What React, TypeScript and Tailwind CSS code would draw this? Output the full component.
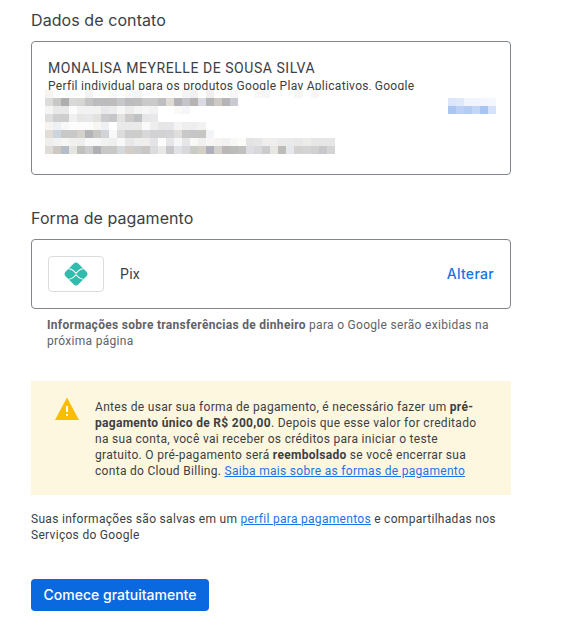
const blurRows: { left: string[]; right?: string[] }[] = [
  {
    left: ['#f7f4ef', '#fafbfc', '#ffffff', '#fdfdfb', '#ffffff', '#f3f3f3', '#ffffff', '#ffffff', '#fafafa', '#ffffff', '#f9f9f9', '#f5f5f5', '#ffffff', '#ffffff', '#ffffff', '#ffffff', '#ffffff', '#f5f5f5', '#f1f1f1', '#ffffff', '#f0f0f0', '#ffffff', '#ffffff', '#f6f6f6', '#ffffff', '#ffffff', '#fbf9f6', '#f5f6f8', '#ffffff', '#ffffff', '#ffffff', '#f6f6f6', '#ffffff', '#f6f6f6'],
  },
  {
    left: ['#dcdcdc', '#c8c8c4', '#aeaeb0', '#d8d8d6', '#d6d6d2', '#c4c6c6', '#bcbcc0', '#bcbcbe', '#bebcbc', '#c6c8cc', '#bcbcbe', '#bebebe', '#cacaca', '#cacaca', '#bebec2', '#dfdbd4', '#b2b2b8', '#c4c4c8', '#b8b2b0', '#d8dce2', '#b6b6b6', '#cec8c4', '#b6b4b6', '#c8cad2'],
    right: ['#dce6fa', '#dfe9fb', '#f0f4fd', '#f0f4fd', '#f3f6fe', '#f4f7fe'],
  },
  {
    left: ['#f6f4f2', '#e8e8e8', '#e8e8e8', '#fbfcfc', '#f2f2f2', '#f2f2f2', '#f2f2f0', '#e8e8ea', '#ececec', '#f8f6f4', '#ececec', '#f4f4f4', '#f6f6f6', '#f2f2f2', '#ffffff', '#ffffff', '#fcfaf6', '#f4f6f9'],
    right: ['#acc6f2', '#bcd1f5', '#b4ccf4', '#c4d6f6', '#a8c4f2', '#d4e2fa'],
  },
  {
    left: ['#dedede', '#cfcfcf', '#cecece', '#f0f0f0', '#e8e6e4', '#e8e8ea', '#e4e2e0', '#ccccce', '#c6c6ca', '#e4e2e0', '#cecccA', '#bfc1c5', '#e6e6e8', '#e8e8ea'],
  },
  {
    left: ['#f6f3f0', '#eef1f4', '#f8f8f8', '#fdfdfd', '#fcfcfc', '#fcfcfc', '#f8f6f3', '#eef0f3', '#ffffff', '#e9e9e9', '#e9e9e9', '#e9e9e9', '#f8f9f8', '#eeeeee', '#e6e6e6', '#e6e6e8', '#f4f4f4', '#eeeeee', '#eeeeee', '#f2f2f2'],
  },
  {
    left: ['#e4dcd6', '#ccd4de', '#c8c8c8', '#c8c8c8', '#d4d0ca', '#b4b4b8', '#c8c6c4', '#d0d4d8', '#f8f8f8', '#dcdcdc', '#cdcdcd', '#cdcdc9', '#d8d8da', '#d2d2d4', '#d2d2d4', '#d4d4d6', '#e0dedc', '#c8c8c8', '#c6c6c6', '#c6c6c2', '#f2f4f8'],
  },
  {
    left: ['#eeeeec', '#f2f2f2', '#f6f7f5', '#f2f0ee', '#eeeeee', '#f8f8f8', '#f8f8f8', '#f2f2f0', '#eef0ee', '#f8f8f8', '#e8e8e8', '#eeeeee', '#f0eeec', '#e4e4e6', '#fcfcfa', '#e6e6e8', '#f6f6f8', '#e6e6e6', '#f8f8f6', '#f0f0f0', '#f8f6f4', '#f6f4f2', '#f2f2f2', '#f8f8f6', '#fcfcfa', '#e6e4e2', '#e4e6e8', '#f0eeec', '#eeeeee', '#eaeaea', '#eaeaea', '#e8e8ea', '#ecece8', '#e6e6e6', '#e6e6e6', '#e6e6e6'],
  },
  {
    left: ['#e0dcd8', '#ccc8c4', '#b4bcc8', '#e4e4e0', '#c0c0bc', '#ccccce', '#b0b0b4', '#c8c8c8', '#c8c8c6', '#d4d8dc', '#d4cec8', '#cccccc', '#cac6c4', '#dcdcde', '#e8e8e8', '#c8c8cc', '#e0e2e6', '#d8d8dc', '#c8ccc4', '#d4d0c8', '#b0b0bc', '#d6d0cc', '#bcb8b8', '#bcbcb8', '#c0c0c0', '#dcdee4', '#d8d8d8', '#ccccd0', '#e8e6e0', '#bcbcb8', '#e4e8ec', '#d4d2d0', '#d4d4d4', '#d0d0d0', '#c8c8cc', '#d4d4d4'],
  },
];

const Cells = ({ colors }: { colors: string[] }) => (
  <div className="flex">
    {colors.map((color, i) => (
      <div key={i} className="w-[8.05px] h-2" style={{ backgroundColor: color }} />
    ))}
  </div>
);

const PixIcon = () => (
  <svg viewBox="0 0 24 24" className="w-6 h-6" fill="none">
    <rect x="3" y="3" width="18" height="18" rx="3.500" transform="rotate(45 12 12)" fill="#32bcad" />
    <path d="M4.500 6.800c2.400 0 3.800.8 5.100 2L12 11.200l2.400-2.400c1.300-1.200 2.700-2 5.100-2" stroke="#fff" strokeWidth="1.100" />
    <path d="M4.500 17.200c2.400 0 3.800-.8 5.100-2L12 12.800l2.400 2.400c1.300 1.200 2.700 2 5.100 2" stroke="#fff" strokeWidth="1.100" />
  </svg>
);

const WarningIcon = () => (
  <svg viewBox="0 0 24 24" className="w-6 h-6">
    <path d="M12 0.500 24 23H0z" fill="#fbbc04" />
    <path d="M11 9h2v6h-2zM11 17h2v2h-2z" fill="#fff" />
  </svg>
);

const App = () => {
  return (
    <div className="w-[586px] h-[636px] bg-white pl-[31px] pr-[75px] font-['Roboto',sans-serif] text-xs leading-4 tracking-[0.3px] text-[#3c4043] overflow-hidden">
      <h2 className="pt-[10px] text-base leading-5 font-normal tracking-[0.08px] font-['Inter',sans-serif] text-[#3c4043]">Dados de contato</h2>

      <div className="mt-[11px] h-[134px] border border-[#80868b] rounded pl-4 pt-[17px]">
        <div className="text-sm leading-[18px] tracking-[0.55px]">MONALISA MEYRELLE DE SOUSA SILVA</div>
        <div className="mt-px h-[12px] overflow-hidden leading-4">Perfil individual para os produtos Google Play Aplicativos, Google</div>
        <div className="-ml-[3px] w-[451px]">
          {blurRows.map((row, i) => (
            <div key={i} className="flex justify-between">
              <Cells colors={row.left} />
              {row.right && <Cells colors={row.right} />}
            </div>
          ))}
        </div>
      </div>

      <h2 className="mt-[33px] text-base leading-5 font-normal tracking-[0.08px] font-['Inter',sans-serif] text-[#3c4043]">Forma de pagamento</h2>

      <div className="mt-[11px] h-[70px] border border-[#80868b] rounded px-4 flex items-center">
        <div className="w-14 h-9 border border-[#dadce0] rounded flex items-center justify-center">
          <PixIcon />
        </div>
        <span className="ml-4 text-sm">Pix</span>
        <a className="ml-auto text-sm font-medium font-['Inter',sans-serif] tracking-[0.3px] text-[#1a73e8]">Alterar</a>
      </div>

      <p className="mt-2 ml-4 text-[#5f6368]">
        <b className="font-bold">Informações sobre transferências de dinheiro</b> para o Google serão exibidas na próxima página
      </p>

      <div className="mt-8 h-[114px] bg-[#fef7e0] pl-6 pr-8 pt-[18px] flex gap-4">
        <div className="-mt-[2px] shrink-0">
          <WarningIcon />
        </div>
        <p>
          Antes de usar sua forma de pagamento, é necessário fazer um <b className="font-bold">pré-pagamento único de R$ 200,00</b>. Depois que esse valor for creditado na sua conta, você vai receber os créditos para iniciar o teste gratuito. O pré-pagamento será <b className="font-bold">reembolsado</b> se você encerrar sua conta do Cloud Billing. <a className="text-[#1a73e8] underline">Saiba mais sobre as formas de pagamento</a>
        </p>
      </div>

      <p className="mt-4">
        Suas informações são salvas em um <a className="text-[#1a73e8] underline">perfil para pagamentos</a> e compartilhadas nos Serviços do Google
      </p>

      <button className="mt-9 h-8 w-[178px] bg-[#0b69e0] rounded text-white text-sm font-medium font-['Inter',sans-serif] tracking-normal">Comece gratuitamente</button>
    </div>
  );
};

export default App;
